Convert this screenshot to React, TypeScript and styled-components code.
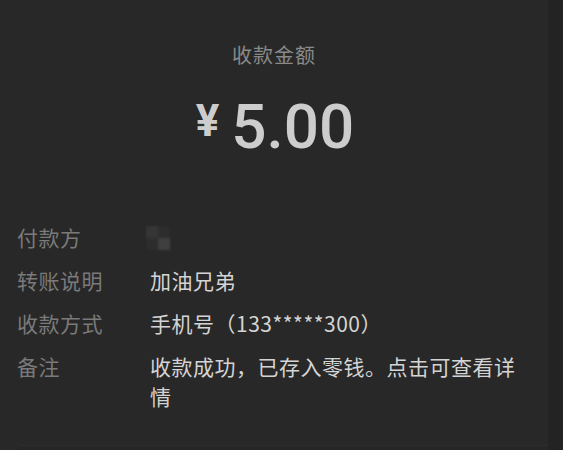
import React from "react";
import styled, { createGlobalStyle } from "styled-components";

const Global = createGlobalStyle`
  html, body { margin: 0; padding: 0; background: #282828; }
  body { height: 450px; overflow: hidden; font-family: "Noto Sans CJK SC", "Noto Sans", sans-serif; }
`;

const Page = styled.div`
  display: flex;
  height: 450px;
  width: 563px;
`;

const Panel = styled.div`
  width: 548px;
  background: #282828;
  display: flex;
  flex-direction: column;
  padding-top: 43px;
  box-sizing: border-box;
`;

const Strip = styled.div`
  flex: 1;
  background: #232323;
`;

const Title = styled.div`
  text-align: center;
  font-size: 20px;
  letter-spacing: 1px;
  line-height: 24px;
  color: #8a8a8a;
`;

const Amount = styled.div`
  margin-top: 29px;
  display: flex;
  justify-content: center;
  align-items: flex-start;
  gap: 12px;
  font-family: Roboto, "Liberation Sans", sans-serif;
  color: #cdcdcd;
  padding-left: 2px;
`;

const Yen = styled.span`
  font-size: 44px;
  line-height: 44px;
  font-weight: 700;
  margin-top: 3px;
`;

const Digits = styled.span`
  font-size: 62px;
  line-height: 62px;
  font-weight: 500;
`;

const Rows = styled.div`
  margin-top: 64px;
  padding: 0 17px;
  display: flex;
  flex-direction: column;
  gap: 13px;
`;

const Row = styled.div`
  display: grid;
  grid-template-columns: 133px 1fr;
  font-size: 21px;
  line-height: 30px;
  letter-spacing: 0.5px;
`;

const Label = styled.div`
  color: #7a7a7a;
`;

const Value = styled.div`
  color: #d4d4d4;
  word-break: break-all;
`;

const Avatar = styled.div`
  width: 24px;
  height: 24px;
  margin-top: 4px;
  margin-left: -4px;
  display: grid;
  grid-template-columns: 1fr 1fr;
  filter: blur(0.8px);
`;

const Cell = styled.div<{ $c: string }>`
  background: ${(p) => p.$c};
`;

const Footer = styled.div`
  margin-top: auto;
  margin-left: 20px;
  height: 4px;
  border-top: 1px solid #2d2d2d;
  background: #262626;
`;

export default function App() {
  return (
    <Page>
      <Global />
      <Panel>
        <Title>收款金额</Title>
        <Amount>
          <Yen>¥</Yen>
          <Digits>5.00</Digits>
        </Amount>
        <Rows>
          <Row>
            <Label>付款方</Label>
            <Value>
              <Avatar>
                <Cell $c="#353535" />
                <Cell $c="#2d2d2d" />
                <Cell $c="#2d2d2d" />
                <Cell $c="#3f3f3f" />
              </Avatar>
            </Value>
          </Row>
          <Row>
            <Label>转账说明</Label>
            <Value>加油兄弟</Value>
          </Row>
          <Row>
            <Label>收款方式</Label>
            <Value>手机号（133*****300）</Value>
          </Row>
          <Row>
            <Label>备注</Label>
            <Value>收款成功，已存入零钱。点击可查看详情</Value>
          </Row>
        </Rows>
        <Footer />
      </Panel>
      <Strip />
    </Page>
  );
}
